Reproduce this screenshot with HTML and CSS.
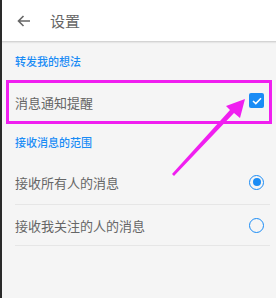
FILE: index.html
```html
<!DOCTYPE html>
<html lang="zh-CN">
<head>
  <meta charset="UTF-8" />
  <meta name="viewport" content="width=device-width, initial-scale=1" />
  <title>设置</title>
  <link rel="stylesheet" href="styles.css">
</head>
<body>
  <div class="screen">
    <header class="topbar">
      <svg class="back" width="14" height="12" viewBox="0 0 14 12">
        <path d="M13 6H1.5M6.5 1L1.5 6l5 5" fill="none" stroke="#666" stroke-width="1.6"/>
      </svg>
      <span class="title">设置</span>
    </header>

    <div class="section-title">转发我的想法</div>
    <div class="row highlight">
      <span>消息通知提醒</span>
      <span class="checkbox">
        <svg width="10" height="8" viewBox="0 0 10 8">
          <path d="M1 4l2.8 2.6L9 1.2" fill="none" stroke="#fff" stroke-width="1.5"/>
        </svg>
      </span>
    </div>

    <div class="section-title second">接收消息的范围</div>
    <div class="row option">
      <span>接收所有人的消息</span>
      <span class="radio checked"></span>
    </div>
    <div class="row option last">
      <span>接收我关注的人的消息</span>
      <span class="radio"></span>
    </div>

    <!-- annotation arrow -->
    <svg class="pointer" width="276" height="298" viewBox="0 0 276 298">
      <polygon points="245,99 240,118 234,113 174,176 172,174 230,110 226,106" fill="#f01ff0"/>
    </svg>
  </div>
</body>
</html>
```

FILE: styles.css
```css
body {
  margin: 0;
  font-family: "Noto Sans CJK SC", "Noto Sans", sans-serif;
  background-color: #f5f5f5;
}

.screen {
  position: relative;
  height: 298px;
  border-left: 2px solid #2a2a2a;
  background-color: #f5f5f5;
  overflow: hidden;
}

/* Barra superior */
.topbar {
  height: 41px;
  background-color: #fff;
  display: flex;
  align-items: center;
  padding-left: 15px;
  box-shadow: 0 1px 0 #d4d4d4, 0 2px 1px #e6e6e6;
  position: relative;
}

.back {
  display: block;
}

.title {
  margin-left: 19px;
  font-size: 15px;
  color: #666;
  line-height: 1;
}

/* Títulos de sección */
.section-title {
  height: 39px;
  display: flex;
  align-items: center;
  padding-left: 13px;
  padding-top: 1px;
  box-sizing: border-box;
  font-size: 11px;
  font-weight: 500;
  color: #1a8cf5;
}

.section-title.second {
  height: 36px;
  padding-top: 0;
}

/* Filas */
.row {
  display: flex;
  align-items: center;
  justify-content: space-between;
  font-size: 13px;
  color: #666;
}

.highlight {
  height: 44px;
  box-sizing: border-box;
  margin: 0 4px 0 4px;
  border: 3px solid #f01ff0;
  padding: 0 5px 0 6px;
}

.checkbox {
  width: 15px;
  height: 15px;
  border-radius: 2px;
  background-color: #1a8cf5;
  display: flex;
  align-items: center;
  justify-content: center;
  margin-top: -3px;
}

.checkbox svg {
  display: block;
}

.option {
  height: 45px;
  margin: 0 6px 0 13px;
  border-bottom: 1px solid #e6e6e6;
  box-sizing: border-box;
  padding-right: 6px;
}

.option.last {
  height: 41px;
}

.radio {
  width: 15px;
  height: 15px;
  border: 1.5px solid #1a8cf5;
  border-radius: 50%;
  box-sizing: border-box;
  display: flex;
  align-items: center;
  justify-content: center;
}

.radio.checked::after {
  content: "";
  width: 8px;
  height: 8px;
  border-radius: 50%;
  background-color: #1a8cf5;
}

.pointer {
  position: absolute;
  left: -2px;
  top: 0;
  pointer-events: none;
}
```
